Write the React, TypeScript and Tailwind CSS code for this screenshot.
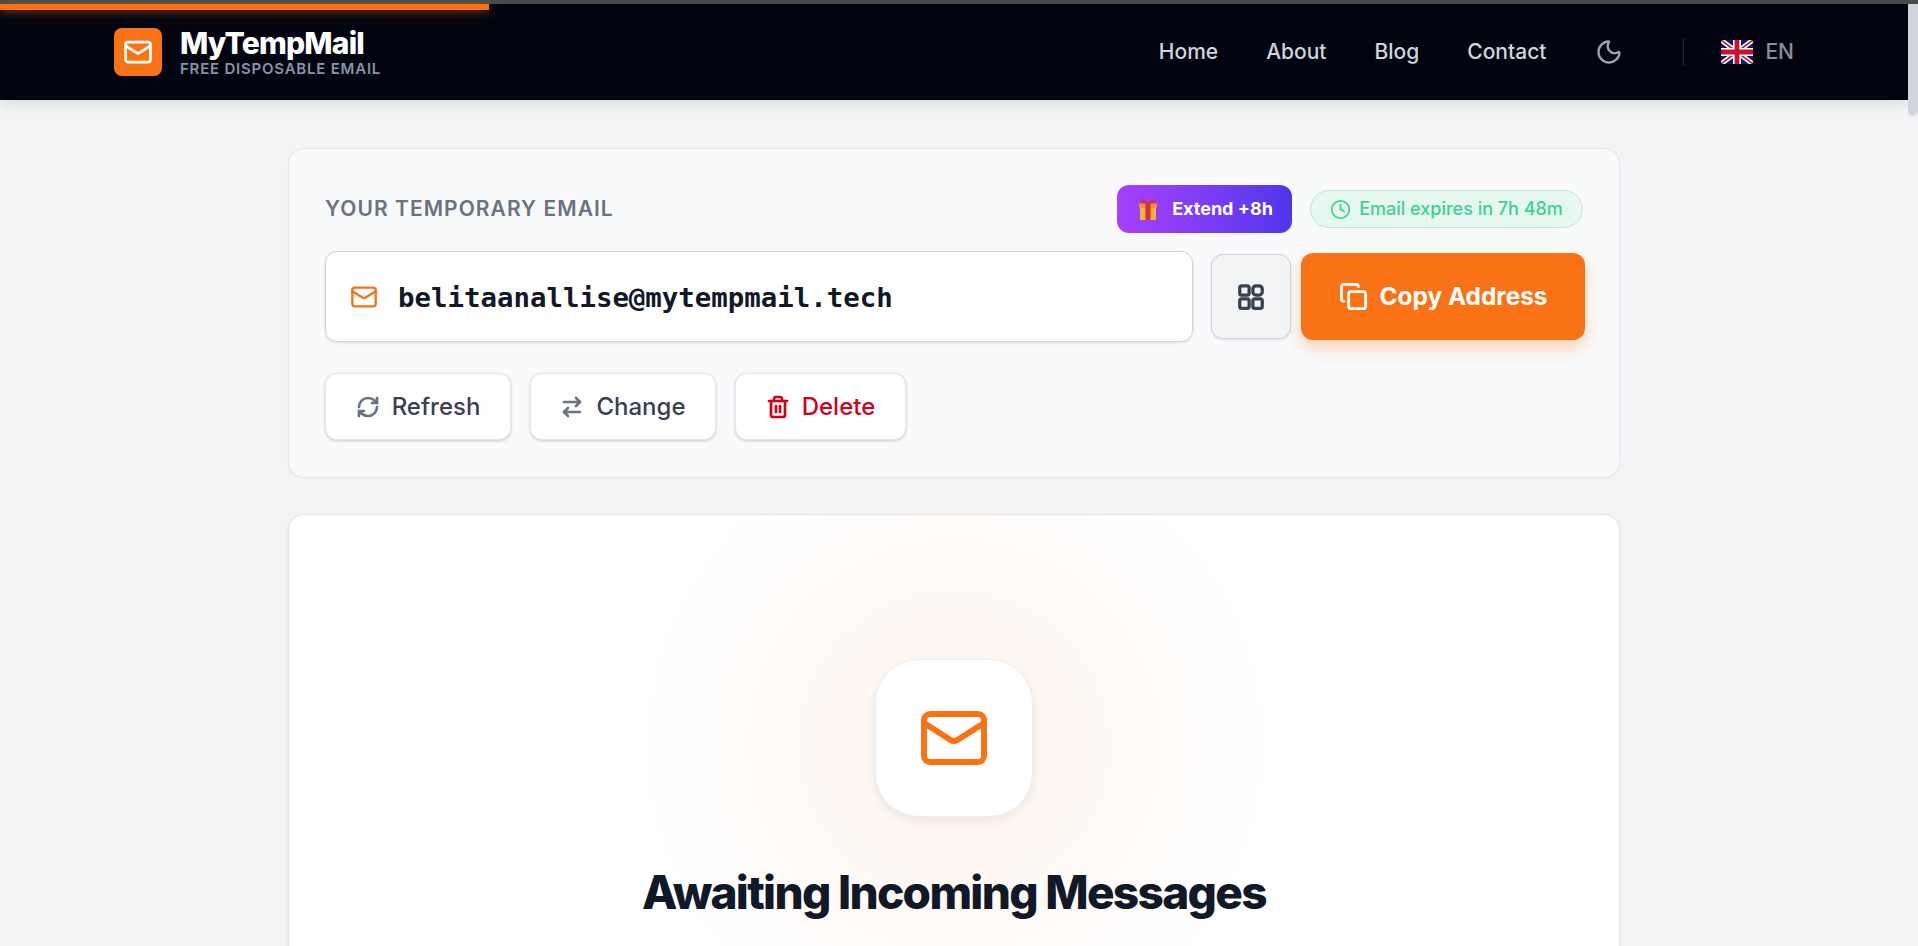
import React from 'react';
import { Mail, Moon, Clock, Copy, RefreshCw, ArrowRightLeft, Trash2 } from 'lucide-react';

const FlagUk = () => (
  <svg viewBox="0 0 60 45" className="h-6 w-8 rounded-[3px]">
    <rect width="60" height="45" fill="#012169" />
    <path d="M0 0L60 45M60 0L0 45" stroke="#fff" strokeWidth="9" />
    <path d="M0 0L60 45M60 0L0 45" stroke="#c8102e" strokeWidth="3" />
    <path d="M30 0V45M0 22.5H60" stroke="#fff" strokeWidth="15" />
    <path d="M30 0V45M0 22.5H60" stroke="#c8102e" strokeWidth="9" />
  </svg>
);

const GiftIcon = () => (
  <svg viewBox="0 0 24 24" className="h-6 w-6">
    <rect x="4" y="10" width="16" height="13" rx="1" fill="#fbb03b" />
    <rect x="3" y="6.500" width="18" height="4.500" rx="1" fill="#f7931e" />
    <rect x="9.500" y="6.500" width="5" height="16.500" fill="#d32f3f" />
    <path d="M12 7C9 1 5 1 5.500 4c.3 1.800 3.500 3 6.500 3zM12 7c3-6 7-6 6.500-3-.3 1.800-3.500 3-6.500 3z" fill="#d32f3f" />
  </svg>
);

// four rounded tiles, rounder than lucide's layout-grid
const TilesIcon = () => (
  <svg viewBox="0 0 24 24" fill="none" stroke="#374151" strokeWidth="2.6" className="h-[30px] w-[30px]">
    <rect x="3" y="3" width="7.500" height="7.500" rx="1.500" />
    <rect x="13.500" y="3" width="7.500" height="7.500" rx="2.500" />
    <rect x="3" y="13.500" width="7.500" height="7.500" rx="1.500" />
    <rect x="13.500" y="13.500" width="7.500" height="7.500" rx="1.500" />
  </svg>
);

const navLinks = ['Home', 'About', 'Blog', 'Contact'];

const Header = () => (
  <header className="relative flex h-24 items-center bg-[#020510] pl-[114px] shadow-[0_4px_12px_rgba(0,0,0,0.1)]">
    <div className="absolute left-0 top-0 h-1.5 w-[489px] bg-[#f97316] shadow-[0_2px_10px_rgba(249,115,22,0.5)]" />
    <div className="flex items-center gap-[18px]">
      <div className="flex h-12 w-12 items-center justify-center rounded-lg bg-[#f97316]">
        <Mail className="h-[30px] w-[30px] text-white" strokeWidth={2.2} />
      </div>
      <div className="flex flex-col">
        <span className="text-[30px] leading-[30px] font-extrabold tracking-[-0.8px] text-white">MyTempMail</span>
        <span className="mt-[3px] text-[15px] leading-[16px] font-semibold tracking-[0.78px] text-[#8b93a7]">FREE DISPOSABLE EMAIL</span>
      </div>
    </div>
    <nav className="ml-auto flex items-center pr-[114px]">
      <div className="flex items-center gap-12 text-[21px] font-medium text-[#d1d5db]">
        {navLinks.map((link) => (
          <span key={link}>{link}</span>
        ))}
      </div>
      <Moon className="ml-[49px] h-7 w-7 text-[#9ca3af]" strokeWidth={2} />
      <div className="ml-[60px] h-7 w-px bg-[#1f2937]" />
      <div className="ml-[37px] flex items-center gap-3">
        <FlagUk />
        <span className="text-[21px] font-medium text-[#8b8f98]">EN</span>
      </div>
    </nav>
  </header>
);

const ActionButton = ({ icon, label, className }: { icon: React.ReactNode; label: string; className: string }) => (
  <button className={`flex h-[67px] items-center justify-center gap-3 rounded-xl border border-[#e5e7eb] bg-white text-2xl font-medium shadow-[0_1px_3px_rgba(0,0,0,0.2)] ${className}`}>
    {icon}
    {label}
  </button>
);

const AddressCard = () => (
  <section className="rounded-2xl border border-[#e5e7eb] bg-[#f9fafb] pt-9 pr-[34px] pb-[37px] pl-9 shadow-[0_1px_2px_rgba(0,0,0,0.03)]">
    <div className="flex items-center justify-between">
      <span className="text-[21px] font-semibold tracking-[1.05px] text-[#6b7280]">YOUR TEMPORARY EMAIL</span>
      <div className="mr-0.5 flex items-center gap-[18px]">
        <button className="flex h-12 w-[175px] items-center justify-center gap-[12px] rounded-xl bg-gradient-to-r from-[#a83ffb] to-[#4f35ec] text-lg font-bold text-white">
          <GiftIcon />
          Extend +8h
        </button>
        <div className="flex h-[38px] w-[273px] items-center justify-center gap-2 rounded-full border border-[#bfe9d6] bg-[#e6f7ef] text-lg font-medium text-[#3ecf9a]">
          <Clock className="h-[21px] w-[21px]" strokeWidth={2} />
          Email expires in 7h 48m
        </div>
      </div>
    </div>
    <div className="mt-[18px] flex items-center">
      <div className="flex h-[91px] w-[868px] items-center gap-[20px] rounded-xl border border-[#d1d5db] bg-white pl-6 shadow-[0_1px_3px_rgba(0,0,0,0.12)]">
        <Mail className="h-7 w-7 text-[#f97316]" strokeWidth={2} />
        <span className="pt-0.5 font-['DejaVu_Sans_Mono',monospace] text-[27.4px] font-bold text-[#111827]">belitaanallise@mytempmail.tech</span>
      </div>
      <button className="ml-[18px] flex h-[85px] w-[80px] items-center justify-center rounded-xl border border-[#d1d5db] bg-[#f3f4f6] shadow-[0_1px_3px_rgba(0,0,0,0.12)]">
        <TilesIcon />
      </button>
      <button className="ml-[10px] flex h-[87px] w-[284px] items-center justify-center gap-3 rounded-xl bg-[#f97316] text-[24.4px] font-bold text-white shadow-[0_8px_16px_rgba(249,115,22,0.3)]">
        <Copy className="h-[29px] w-[29px]" strokeWidth={2.4} />
        Copy Address
      </button>
    </div>
    <div className="mt-[31px] flex gap-[19px]">
      <ActionButton
        className="w-[186px] text-[#374151]"
        label="Refresh"
        icon={<RefreshCw className="h-6 w-6 text-[#6b7280]" strokeWidth={2.7} />}
      />
      <ActionButton
        className="w-[186px] text-[#374151]"
        label="Change"
        icon={<ArrowRightLeft className="h-6 w-6 text-[#6b7280]" strokeWidth={2.7} />}
      />
      <ActionButton
        className="w-[171px] text-[#d0021b]"
        label="Delete"
        icon={<Trash2 className="h-6 w-6" strokeWidth={2.7} />}
      />
    </div>
  </section>
);

const InboxCard = () => (
  <section className="relative mt-9 flex flex-col items-center overflow-hidden rounded-2xl border border-[#e5e7eb] bg-white pt-36 pb-24 shadow-[0_1px_3px_rgba(0,0,0,0.08)]">
    <div className="absolute left-1/2 top-[-100px] h-[660px] w-[660px] -translate-x-1/2 rounded-full bg-[radial-gradient(circle,rgba(249,115,22,0.09)_0%,rgba(249,115,22,0.04)_35%,rgba(249,115,22,0.012)_55%,rgba(249,115,22,0)_72%)]" />
    <div className="relative flex h-[158px] w-[158px] items-center justify-center rounded-[44px] border border-[#eeeeee] bg-white shadow-[0_4px_10px_rgba(0,0,0,0.07)]">
      <Mail className="h-[72px] w-[72px] text-[#f97316]" strokeWidth={2} />
    </div>
    <h2 className="relative mt-[45px] text-[46px] leading-[60px] font-extrabold tracking-[-1.7px] text-[#111827]">Awaiting Incoming Messages</h2>
    <div className="h-40" />
  </section>
);

export default function App() {
  return (
    <div className="relative h-[946px] overflow-hidden bg-[#f3f4f6] font-['Inter',sans-serif]">
      <div className="h-1 bg-[#4b4b4b]" />
      <div className="mr-[10px]">
        <Header />
        <main className="mx-auto mt-[48px] w-[1332px]">
          <AddressCard />
          <InboxCard />
        </main>
      </div>
      {/* fake scrollbar */}
      <div className="absolute right-0 top-1 h-[942px] w-[10px] bg-[#f3f4f6]">
        <div className="h-[112px] rounded-b-md bg-[#d1d5db]" />
      </div>
    </div>
  );
}
